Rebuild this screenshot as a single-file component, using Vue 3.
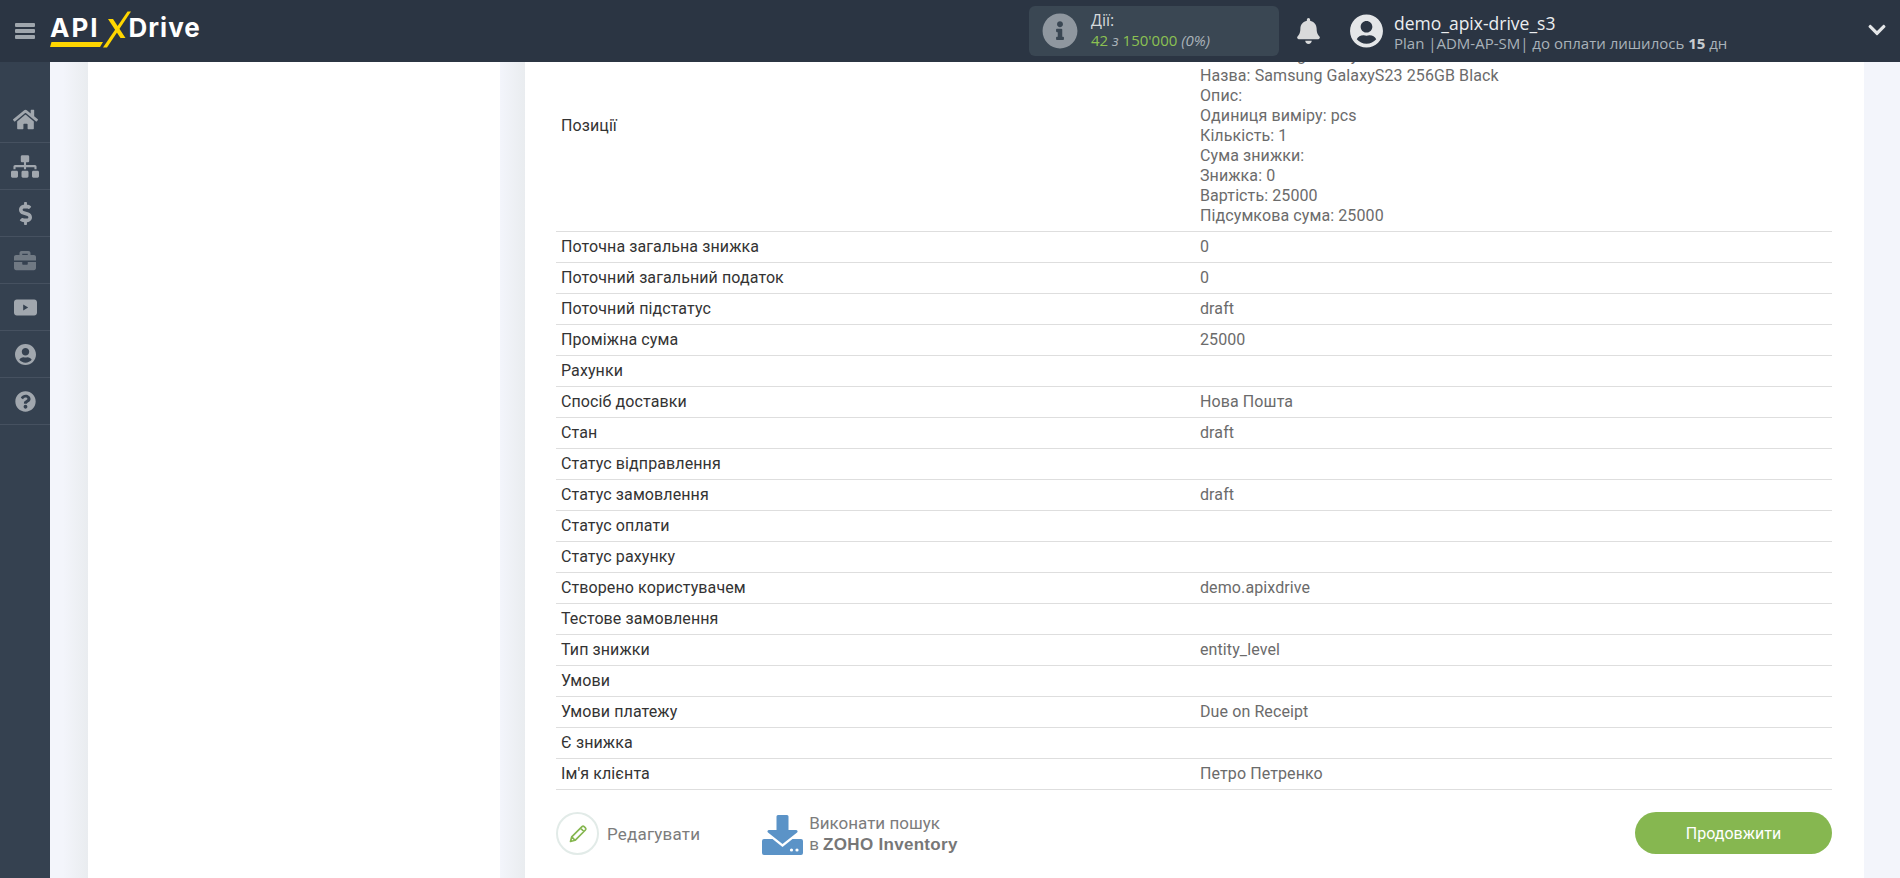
<script setup>
const rows = [
  ['Поточна загальна знижка', '0'],
  ['Поточний загальний податок', '0'],
  ['Поточний підстатус', 'draft'],
  ['Проміжна сума', '25000'],
  ['Рахунки', ''],
  ['Спосіб доставки', 'Нова Пошта'],
  ['Стан', 'draft'],
  ['Статус відправлення', ''],
  ['Статус замовлення', 'draft'],
  ['Статус оплати', ''],
  ['Статус рахунку', ''],
  ['Створено користувачем', 'demo.apixdrive'],
  ['Тестове замовлення', ''],
  ['Тип знижки', 'entity_level'],
  ['Умови', ''],
  ['Умови платежу', 'Due on Receipt'],
  ['Є знижка', ''],
  ["Ім'я клієнта", 'Петро Петренко']
]
const positions = [
  'Позиція: 1',
  'SKU: Samsung GalaxyS23',
  'Назва: Samsung GalaxyS23 256GB Black',
  'Опис:',
  'Одиниця виміру: pcs',
  'Кількість: 1',
  'Сума знижки:',
  'Знижка: 0',
  'Вартість: 25000',
  'Підсумкова сума: 25000'
]
const nav = [
  { box: '0 0 576 512', w: 25, o: 1, d: 'M280.37 148.26L96 300.11V464a16 16 0 0 0 16 16l112.06-.29a16 16 0 0 0 15.92-16V368a16 16 0 0 1 16-16h64a16 16 0 0 1 16 16v95.64a16 16 0 0 0 16 16.05L464 480a16 16 0 0 0 16-16V300L295.67 148.26a12.19 12.19 0 0 0-15.3 0zM571.6 251.47L488 182.56V44.05a12 12 0 0 0-12-12h-56a12 12 0 0 0-12 12v72.61L318.47 43a48 48 0 0 0-61 0L4.34 251.47a12 12 0 0 0-1.6 16.9l25.5 31A12 12 0 0 0 45.15 301l235.22-193.74a12.19 12.19 0 0 1 15.3 0L530.9 301a12 12 0 0 0 16.9-1.6l25.5-31a12 12 0 0 0-1.7-16.93z' },
  { box: '0 0 640 512', w: 28, o: 1, d: 'M128 352H32c-17.67 0-32 14.33-32 32v96c0 17.67 14.33 32 32 32h96c17.67 0 32-14.33 32-32v-96c0-17.67-14.33-32-32-32zm-24-80h192v48h48v-48h192v48h48v-57.59c0-21.17-17.23-38.41-38.41-38.41H344v-64h40c17.67 0 32-14.33 32-32V32c0-17.67-14.33-32-32-32H256c-17.67 0-32 14.33-32 32v96c0 17.67 14.33 32 32 32h40v64H94.41C73.23 224 56 241.23 56 262.41V320h48v-48zm264 80h-96c-17.67 0-32 14.33-32 32v96c0 17.67 14.33 32 32 32h96c17.67 0 32-14.33 32-32v-96c0-17.67-14.33-32-32-32zm240 0h-96c-17.67 0-32 14.33-32 32v96c0 17.67 14.33 32 32 32h96c17.67 0 32-14.33 32-32v-96c0-17.67-14.33-32-32-32z' },
  { box: '0 0 288 512', w: 13, o: 1, d: 'M209.2 233.4l-108-31.6C88.7 198.2 80 186.5 80 173.5c0-16.3 13.2-29.5 29.5-29.5h66.3c12.2 0 24.2 3.7 34.2 10.5 6.1 4.1 14.3 3.1 19.5-2l34.8-34c7.1-6.9 6.1-18.4-1.8-24.5C238 74.8 207.4 64.1 176 64V16c0-8.8-7.2-16-16-16h-32c-8.8 0-16 7.2-16 16v48h-2.5C45.8 64-5.4 118.7.5 183.6c4.2 46.1 39.4 83.6 83.8 96.6l102.5 30c12.5 3.7 21.2 15.3 21.2 28.3 0 16.3-13.2 29.5-29.5 29.5h-66.3C100 368 88 364.3 78 357.5c-6.1-4.1-14.3-3.1-19.5 2l-34.8 34c-7.1 6.9-6.1 18.4 1.8 24.5 24.5 19.2 55.1 29.9 86.5 30v48c0 8.8 7.2 16 16 16h32c8.8 0 16-7.2 16-16v-48.2c46.6-.9 90.3-28.6 105.7-72.7 21.5-61.6-14.6-124.8-72.5-141.7z' },
  { box: '0 0 512 512', w: 22, o: 0.55, d: 'M320 336c0 8.84-7.16 16-16 16h-96c-8.84 0-16-7.16-16-16v-48H0v144c0 25.6 22.4 48 48 48h416c25.6 0 48-22.4 48-48V288H320v48zm144-208h-80V80c0-25.6-22.4-48-48-48H176c-25.6 0-48 22.4-48 48v48H48c-25.6 0-48 22.4-48 48v80h512v-80c0-25.6-22.4-48-48-48zm-144 0H192V96h128v32z' },
  { box: '0 0 576 400', w: 23, o: 1, rule: 'evenodd', d: 'M70 0H506C545 0 576 31 576 70V330C576 369 545 400 506 400H70C31 400 0 369 0 330V70C0 31 31 0 70 0ZM230 125V275L355 200Z' },
  { box: '0 0 496 512', w: 21, o: 1, d: 'M248 8C111 8 0 119 0 256s111 248 248 248 248-111 248-248S385 8 248 8zm0 96c48.6 0 88 39.4 88 88s-39.4 88-88 88-88-39.4-88-88 39.4-88 88-88zm0 344c-58.7 0-111.3-26.6-146.5-68.2 18.8-35.4 55.6-59.8 98.5-59.8 2.4 0 4.8.4 7.1 1.1 13 4.2 26.6 6.9 40.9 6.9 14.3 0 28-2.7 40.9-6.9 2.3-.7 4.7-1.1 7.1-1.1 42.9 0 79.7 24.4 98.5 59.8C359.3 421.4 306.7 448 248 448z' },
  { box: '0 0 512 512', w: 21, o: 1, d: 'M504 256c0 136.997-111.043 248-248 248S8 392.997 8 256C8 119.083 119.043 8 256 8s248 111.083 248 248zM262.655 90c-54.497 0-89.255 22.957-116.549 63.758-3.536 5.286-2.353 12.415 2.715 16.258l34.699 26.31c5.205 3.947 12.621 3.008 16.665-2.122 17.864-22.658 30.113-35.797 57.303-35.797 20.429 0 45.698 13.148 45.698 32.958 0 14.976-12.363 22.667-32.534 33.976C247.128 238.528 216 254.941 216 296v4c0 6.627 5.373 12 12 12h56c6.627 0 12-5.373 12-12v-1.333c0-28.462 83.186-29.647 83.186-106.667 0-58.002-60.165-102-116.531-102zM256 338c-25.365 0-46 20.635-46 46 0 25.364 20.635 46 46 46s46-20.636 46-46c0-25.365-20.635-46-46-46z' }
]
</script>

<template>
  <div class="page">
    <header class="top">
      <div class="brand">
        <svg class="burger" viewBox="0 0 20 16" width="20" height="16"><path d="M1 0h18a1 1 0 0 1 1 1v2a1 1 0 0 1-1 1H1a1 1 0 0 1-1-1V1a1 1 0 0 1 1-1zm0 6h18a1 1 0 0 1 1 1v2a1 1 0 0 1-1 1H1a1 1 0 0 1-1-1V7a1 1 0 0 1 1-1zm0 6h18a1 1 0 0 1 1 1v2a1 1 0 0 1-1 1H1a1 1 0 0 1-1-1v-2a1 1 0 0 1 1-1z" /></svg>
        <div class="logo">
          <span class="logo-text logo-api">API</span>
          <span class="logo-text logo-drive">Drive</span>
          <svg class="logo-x" viewBox="0 0 28 37" width="28" height="37">
            <path d="M0 36.500 L24.500 0.500 L28 0.500 L4 36.500Z" fill="#ffd600" />
            <path d="M5 8 L10 8 L22.500 27 L17.500 27Z" fill="#ffd600" />
          </svg>
          <svg class="logo-under" viewBox="0 0 53 5" width="53" height="5"><path d="M1.500 0H53L50 5H0Z" fill="#ffd600" /></svg>
        </div>
      </div>
      <div class="stats">
        <svg class="stats-icon" viewBox="0 0 512 512" width="36" height="36"><path d="M256 8C119.043 8 8 119.083 8 256c0 136.997 111.043 248 248 248s248-111.003 248-248C504 119.083 392.957 8 256 8zm0 110c23.196 0 42 18.804 42 42s-18.804 42-42 42-42-18.804-42-42 18.804-42 42-42zm56 254c0 6.627-5.373 12-12 12h-88c-6.627 0-12-5.373-12-12v-24c0-6.627 5.373-12 12-12h12v-64h-12c-6.627 0-12-5.373-12-12v-24c0-6.627 5.373-12 12-12h64c6.627 0 12 5.373 12 12v100h12c6.627 0 12 5.373 12 12v24z" /></svg>
        <div class="stats-text">
          <div class="stats-title">Дії:</div>
          <div class="stats-value"><b>42</b> <i>з</i> <b>150'000</b> <i>(0%)</i></div>
        </div>
      </div>
      <svg class="bell" viewBox="0 0 448 512" width="23" height="26"><path d="M224 512c35.32 0 63.97-28.65 63.97-64H160.03c0 35.35 28.65 64 63.97 64zm215.39-149.71c-19.32-20.76-55.47-51.99-55.47-154.29 0-77.7-54.48-139.9-127.94-155.16V32c0-17.67-14.32-32-31.98-32s-31.98 14.33-31.98 32v20.84C118.56 68.1 64.08 130.3 64.08 208c0 102.3-36.15 133.53-55.47 154.29-6 6.45-8.66 14.16-8.61 21.71.11 16.4 12.98 32 32.1 32h383.8c19.12 0 32-15.6 32.1-32 .05-7.55-2.61-15.27-8.61-21.71z" /></svg>
      <svg class="avatar" viewBox="0 0 496 512" width="33" height="34"><path d="M248 8C111 8 0 119 0 256s111 248 248 248 248-111 248-248S385 8 248 8zm0 96c48.6 0 88 39.4 88 88s-39.4 88-88 88-88-39.4-88-88 39.4-88 88-88zm0 344c-58.7 0-111.3-26.6-146.5-68.2 18.8-35.4 55.6-59.8 98.5-59.8 2.4 0 4.8.4 7.1 1.1 13 4.2 26.6 6.9 40.9 6.9 14.3 0 28-2.7 40.9-6.9 2.3-.7 4.7-1.1 7.1-1.1 42.9 0 79.7 24.4 98.5 59.8C359.3 421.4 306.7 448 248 448z" /></svg>
      <div class="account">
        <div class="account-name">demo_apix-drive_s3</div>
        <div class="account-plan">Plan |ADM-AP-SM| до оплати лишилось <b>15</b> дн</div>
      </div>
      <svg class="caret" viewBox="0 0 448 512" width="18" height="20"><path d="M207.029 381.476L12.686 187.132c-9.373-9.373-9.373-24.569 0-33.941l22.667-22.667c9.357-9.357 24.522-9.375 33.901-.04L224 284.505l154.745-154.021c9.379-9.335 24.544-9.317 33.901.04l22.667 22.667c9.373 9.373 9.373 24.569 0 33.941L240.971 381.476c-9.373 9.372-24.569 9.372-33.942 0z" /></svg>
    </header>

    <div class="body">
      <nav class="side">
        <div v-for="(n, i) in nav" :key="i" class="side-item">
          <svg :viewBox="n.box" :width="n.w" height="25" :style="{ opacity: n.o }"><path :d="n.d" :fill-rule="n.rule || 'nonzero'" /></svg>
        </div>
      </nav>
      <main class="main">
        <div class="columns">
          <section class="card card-left"></section>
          <section class="card card-right">
            <div class="row row-tall">
              <div class="key">Позиції</div>
              <div class="val"><div v-for="p in positions" :key="p">{{ p }}</div></div>
            </div>
            <div v-for="r in rows" :key="r[0]" class="row">
              <div class="key">{{ r[0] }}</div>
              <div class="val">{{ r[1] }}</div>
            </div>
            <div class="actions">
              <div class="edit">
                <span class="edit-circle">
                  <svg viewBox="0 0 20 20" width="20" height="20" fill="none" stroke="#86b750" stroke-width="1.7" stroke-linejoin="round"><path d="M2.5 17.5l1.2-4.6L14 2.6a1.5 1.5 0 0 1 2.1 0l1.3 1.3a1.5 1.5 0 0 1 0 2.1L7.100 16.300zM12.500 4.100l3.400 3.400M3.700 12.900l3.400 3.400" /></svg>
                </span>
                <span class="edit-label">Редагувати</span>
              </div>
              <div class="search">
                <svg viewBox="0 0 41 40" width="41" height="40"><path fill="#5b93c7" d="M16 0h9a1.500 1.500 0 0 1 1.500 1.500V15h7.500c1.500 0 2.200 1.500 1.100 2.600L20.500 29 6 17.600C4.900 16.500 5.500 15 7 15h7.500V1.500A1.500 1.500 0 0 1 16 0z"/><path fill="#5b93c7" d="M2 24h8.500l10 8 10-8H39a2 2 0 0 1 2 2v12a2 2 0 0 1-2 2H2a2 2 0 0 1-2-2V26a2 2 0 0 1 2-2z"/><circle cx="29.500" cy="35" r="1.600" fill="#fff"/><circle cx="35" cy="35" r="1.600" fill="#fff"/></svg>
                <div class="search-text">Виконати пошук<br />в <b>ZOHO Inventory</b></div>
              </div>
              <button class="next" type="button">Продовжити</button>
            </div>
          </section>
        </div>
      </main>
    </div>
  </div>
</template>

<style>
html, body { margin: 0; padding: 0; overflow: hidden; }
</style>

<style scoped>
.page { width: 1900px; height: 878px; display: flex; flex-direction: column; overflow: hidden; font-family: Roboto, sans-serif; background: #f3f5fb; }
.top { height: 62px; flex: none; background: #2b3543; display: flex; align-items: center; position: relative; z-index: 3; }
.brand { width: 1029px; flex: none; display: flex; align-items: center; padding-left: 15px; box-sizing: border-box; }
.burger { fill: #9fa6ad; flex: none; }
.logo { margin: 0 0 6px 15px; display: flex; align-items: center; position: relative; height: 40px; }
.logo-text { font-family: Inter, sans-serif; font-weight: 700; font-size: 26px; color: #fff; line-height: 40px; }
.logo-api { letter-spacing: 2px; }
.logo-drive { margin-left: 29px; letter-spacing: 1px; }
.logo-x { position: absolute; left: 53px; top: 3px; }
.logo-under { position: absolute; left: 0; top: 34px; }
.stats { width: 250px; height: 50px; flex: none; box-sizing: border-box; background: #3a4753; border-radius: 6px; display: flex; align-items: center; padding-left: 13px; font-family: "Open Sans", sans-serif; }
.stats-icon { fill: #8f979f; flex: none; }
.stats-text { margin: 0 0 2px 13px; }
.stats-title { font-size: 16px; line-height: 20px; color: #d5d9dc; }
.stats-value { font-size: 15px; line-height: 20px; color: #a9b2b9; white-space: nowrap; }
.stats-value b { font-weight: 400; color: #8cc152; }
.bell { fill: #d9dadb; flex: none; margin-left: 18px; }
.avatar { fill: #e4e6e8; flex: none; margin-left: 30px; }
.account { margin: 2px 0 0 11px; font-family: "Open Sans", sans-serif; white-space: nowrap; }
.account-name { font-size: 17.5px; line-height: 22px; color: #eceef0; }
.account-plan { font-size: 15px; line-height: 18px; color: #a9b2b9; }
.account-plan b { color: #c8ccd0; }
.caret { fill: #e4e6e8; flex: none; position: absolute; right: 14px; top: 20px; }
.body { flex: 1; min-height: 0; display: flex; }
.side { width: 50px; flex: none; background: #354150; padding-top: 34px; box-sizing: border-box; }
.side-item { height: 47px; box-sizing: border-box; border-bottom: 1px solid #465160; display: flex; align-items: center; justify-content: center; fill: #a1a7ae; }
.main { flex: 1; min-width: 0; overflow: hidden; }
.columns { display: flex; margin-top: -41px; padding-left: 38px; }
.card { background: #fff; position: relative; }
.card::before { content: ""; position: absolute; top: 0; bottom: 0; right: 100%; width: 25px; background: linear-gradient(to right, rgba(76, 95, 52, 0), rgba(76, 95, 52, 0.06)); }
.card-left { width: 412px; }
.card-right { width: 1339px; margin-left: 25px; padding: 0 32px 0 31px; box-sizing: border-box; }
.row { display: flex; border-bottom: 1px solid #dedede; font-size: 16px; line-height: 20px; letter-spacing: 0.1px; min-height: 31px; box-sizing: border-box; }
.row-tall { align-items: center; }
.key { width: 639px; flex: none; padding: 5px; box-sizing: border-box; color: #333; }
.val { flex: 1; padding: 5px; color: #6b6b6b; }
.actions { display: flex; align-items: flex-start; padding-top: 22px; padding-bottom: 40px; }
.edit { display: flex; align-items: center; }
.edit-circle { width: 43px; height: 43px; box-sizing: border-box; border: 2px solid #e2ebe8; border-radius: 50%; display: flex; align-items: center; justify-content: center; }
.edit-label { margin-left: 8px; font-size: 17px; letter-spacing: 0.2px; color: #7c7c7c; }
.search { display: flex; align-items: flex-start; margin-left: 62px; padding-top: 3px; }
.search-text { margin: -2px 0 0 6px; font-size: 17px; line-height: 21px; color: #7c7c7c; }
.search-text b { font-family: "Liberation Sans", sans-serif; color: #777; letter-spacing: 0.3px; }
.next { margin-left: auto; width: 197px; height: 42px; border: 0; border-radius: 21px; background: #86b750; color: #fff; font: 400 16px Roboto, sans-serif; }
</style>
